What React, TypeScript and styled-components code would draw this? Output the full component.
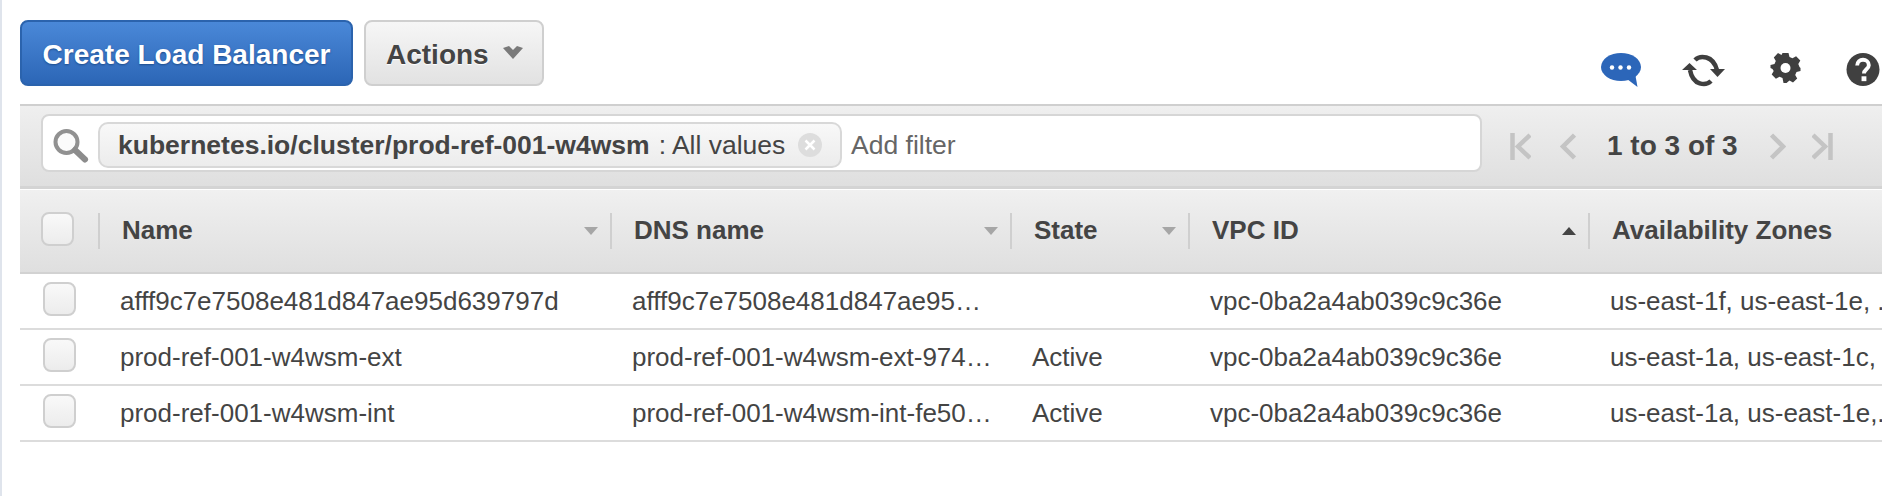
import React from 'react';
import styled, { createGlobalStyle } from 'styled-components';

const Global = createGlobalStyle`
  html, body { margin: 0; padding: 0; background: #fff; }
  body { font-family: "Liberation Sans", Arial, sans-serif; color: #444; overflow: hidden; }
`;

const Page = styled.div`
  height: 496px;
  box-sizing: border-box;
  border-left: 2px solid #dfe4ec;
  padding: 20px 20px 0 18px;
`;

const TopBar = styled.div`
  display: flex;
  align-items: flex-start;
  height: 84px;
`;

const PrimaryButton = styled.button`
  width: 333px;
  height: 66px;
  box-sizing: border-box;
  border: 2px solid #2b63ad;
  border-radius: 8px;
  background: linear-gradient(#4a88d8, #2c66b6);
  color: #fff;
  font: bold 28px "Liberation Sans", Arial, sans-serif;
  text-shadow: 0 1px 2px #1d4c8c;
  padding: 4px 0 0;
`;

const SecondaryButton = styled.button`
  margin-left: 11px;
  width: 180px;
  height: 66px;
  box-sizing: border-box;
  border: 2px solid #cfcfcf;
  border-radius: 8px;
  background: linear-gradient(#f6f6f6, #e2e2e2);
  color: #444;
  font: bold 28px "Liberation Sans", Arial, sans-serif;
  text-shadow: 0 1px 1px #fff;
  display: flex;
  align-items: center;
  padding: 4px 0 0 20px;
  gap: 14px;
`;

const ChevronWrap = styled.span`
  display: flex;
  margin-top: -6px;
`;

const Icons = styled.div`
  margin-left: auto;
  margin-right: 2px;
  margin-top: 33px;
  display: flex;
  align-items: flex-start;
`;

const FilterBar = styled.div`
  height: 85px;
  box-sizing: border-box;
  border-top: 2px solid #cfcfcf;
  border-bottom: 3px solid #d4d4d4;
  background: linear-gradient(#efefef, #dfdfdf);
  display: flex;
  align-items: flex-start;
  padding: 8px 0 0 21px;
`;

const SearchBox = styled.div`
  width: 1441px;
  height: 58px;
  box-sizing: border-box;
  border: 2px solid #d6d6d6;
  border-radius: 8px;
  background: #fff;
  display: flex;
  align-items: center;
  padding-left: 10px;
`;

const SearchIcon = styled.span`
  display: flex;
  margin-top: 6px;
`;

const Token = styled.div`
  margin: 4px 0 0 9px;
  width: 744px;
  height: 46px;
  box-sizing: border-box;
  border: 2px solid #d8d8d8;
  border-radius: 10px;
  background: linear-gradient(#f8f8f8, #ececec);
  display: flex;
  align-items: center;
  padding-left: 18px;
  font-size: 26.5px;
  white-space: nowrap;
`;

const TokenKey = styled.b`
  font-weight: bold;
  margin-right: 9px;
`;

const TokenClose = styled.span`
  margin-left: 13px;
  display: flex;
`;

const AddFilter = styled.span`
  margin: 4px 0 0 9px;
  font-size: 26.5px;
  color: #666;
`;

const Pager = styled.div`
  margin: 17px 0 0 28px;
  height: 30px;
  display: flex;
  align-items: center;
`;

const PagerText = styled.span`
  font-weight: bold;
  font-size: 28px;
  margin: 0 32px 0 31px;
  white-space: nowrap;
`;

const Spacer = styled.div<{ $w: number }>`
  width: ${p => p.$w}px;
  flex: none;
`;

const Grid = styled.div`
  margin-top: 1px;
  display: grid;
  grid-template-columns: 80px 512px 400px 178px 400px 292px;
`;

const HeadCell = styled.div`
  height: 84px;
  box-sizing: border-box;
  border-bottom: 2px solid #d2d2d2;
  background: linear-gradient(#f0f0f0, #dfdfdf);
  display: flex;
  align-items: flex-start;
  padding: 25px 0 0 22px;
  position: relative;
  font-weight: bold;
  font-size: 26px;
  white-space: nowrap;
  overflow: hidden;
  line-height: 30px;
`;

const HeadCheckCell = styled(HeadCell)`
  padding: 22px 0 0;
`;

const Divider = styled.span`
  position: absolute;
  right: 0;
  top: 23px;
  width: 2px;
  height: 36px;
  background: #cfcfcf;
  box-shadow: 1px 0 0 #f6f6f6;
`;

const SortMark = styled.span<{ $up?: boolean }>`
  position: absolute;
  right: 14px;
  top: 37px;
  width: 0;
  height: 0;
  border-left: 7px solid transparent;
  border-right: 7px solid transparent;
  ${p => (p.$up ? `border-bottom: 8px solid #444;` : `border-top: 8px solid #a6a6a6;`)}
`;

const Check = styled.span<{ $head?: boolean }>`
  display: block;
  width: 33px;
  height: 34px;
  box-sizing: border-box;
  border: 2px solid #cfcfcf;
  border-radius: 8px;
  background: linear-gradient(#f9f9f9, #ececec);
  margin-left: ${p => (p.$head ? 21 : 22.5)}px;
`;

const Cell = styled.div`
  height: 56px;
  box-sizing: border-box;
  border-bottom: 2px solid #dcdcdc;
  display: flex;
  align-items: center;
  padding-left: 20px;
  font-size: 26px;
  color: #444;
  white-space: nowrap;
  overflow: hidden;
`;

const CheckCell = styled(Cell)`
  padding-left: 0;
  align-items: flex-start;
  padding-top: 8px;
`;

const PagerIcon = ({ d, w }: { d: string; w: number }) => (
  <svg width={w} height="27" viewBox={`0 0 ${w} 27`} fill="none" stroke="#c4c4c4" strokeWidth="4.5">
    <path d={d} />
  </svg>
);

const columns = [
  { label: 'Name' },
  { label: 'DNS name' },
  { label: 'State' },
  { label: 'VPC ID', up: true },
];

const rows = [
  ['afff9c7e7508e481d847ae95d639797d', 'afff9c7e7508e481d847ae95…', '', 'us-east-1f, us-east-1e, ...'],
  ['prod-ref-001-w4wsm-ext', 'prod-ref-001-w4wsm-ext-974…', 'Active', 'us-east-1a, us-east-1c,'],
  ['prod-ref-001-w4wsm-int', 'prod-ref-001-w4wsm-int-fe50…', 'Active', 'us-east-1a, us-east-1e,..'],
];

export default function App() {
  return (
    <>
      <Global />
      <Page>
        <TopBar>
          <PrimaryButton>Create Load Balancer</PrimaryButton>
          <SecondaryButton>
            Actions
            <ChevronWrap>
              <svg width="20" height="13" viewBox="0 0 20 13">
                <path d="M0 2 L6 0 L10 4 L14 0 L20 2 L10 13 Z" fill="#7a7a7a" />
              </svg>
            </ChevronWrap>
          </SecondaryButton>
          <Icons>
            <svg width="40" height="34" viewBox="0 0 40 34">
              <ellipse cx="20" cy="14" rx="20" ry="14" fill="#2c66b9" />
              <path d="M26 26 L36.500 34 L34 20 Z" fill="#2c66b9" />
              <circle cx="11" cy="14.500" r="2.200" fill="#fff" />
              <circle cx="19.500" cy="14.500" r="2.200" fill="#fff" />
              <circle cx="28" cy="14.500" r="2.200" fill="#fff" />
            </svg>
            <Spacer $w={41} />
            <svg width="43" height="34" viewBox="0 0 43 34" fill="none" stroke="#3f3f3f" strokeWidth="4.500">
              <path d="M13 7C18 2 31 2 35 17" />
              <path d="M29 28C24 33 11 33 8 17" />
              <path d="M28 16h15l-7.500 8zM0 17h15L7.500 10z" fill="#3f3f3f" stroke="none" />
            </svg>
            <Spacer $w={45} />
            <svg width="31" height="30" viewBox="0 0 30 30">
              <path d="M12 0h6l1 4 3 1.300 3.600-2 4.200 4.200-2 3.500L29 14l1 1v3l-4 1-1.300 3 2 3.600-4.200 4-3.500-2L16 30h-3l-1-5-3-1.300-3.600 2-4.200-4.200 2-3.500L2 16l-2-1v-3l4-1 1.300-3-2-3.600L7.500 0l3.500 2z" fill="#3f3f3f" />
              <circle cx="15" cy="15" r="5" fill="#fff" />
            </svg>
            <Spacer $w={45} />
            <svg width="34" height="33" viewBox="0 0 35 34">
              <circle cx="17.500" cy="17" r="17" fill="#404040" />
              <path d="M11.500 13c0-4 3-6 6-6s6 2 6 5.500c0 4-5 4.500-5 8.500" fill="none" stroke="#fff" strokeWidth="4" />
              <rect x="16" y="24" width="5" height="5" fill="#fff" />
            </svg>
          </Icons>
        </TopBar>
        <FilterBar>
          <SearchBox>
            <SearchIcon>
              <svg width="36" height="34" viewBox="0 0 36 34" fill="none">
                <circle cx="13.500" cy="13" r="11" stroke="#919191" strokeWidth="4" fill="#fbfbfb" />
                <path d="M22 21 L32 30.500" stroke="#8c8c8c" strokeWidth="6" strokeLinecap="round" />
              </svg>
            </SearchIcon>
            <Token>
              <TokenKey>kubernetes.io/cluster/prod-ref-001-w4wsm</TokenKey>
              : All values
              <TokenClose>
                <svg width="24" height="24" viewBox="0 0 24 24">
                  <circle cx="12" cy="12" r="12" fill="#dddddd" />
                  <path d="M7.500 7.500l9 9M16.500 7.500l-9 9" stroke="#fff" strokeWidth="2.500" />
                </svg>
              </TokenClose>
            </Token>
            <AddFilter>Add filter</AddFilter>
          </SearchBox>
          <Pager>
            <PagerIcon w={21} d="M2.500 0v27M20 2 8 13.500l12 11.500" />
            <Spacer $w={29} />
            <PagerIcon w={16} d="M14.500 2 3 13.500l11.500 11.500" />
            <PagerText>1 to 3 of 3</PagerText>
            <PagerIcon w={16} d="M1.500 2 13 13.500 1.500 25" />
            <Spacer $w={26} />
            <PagerIcon w={21} d="M1 2l12 11.500L1 25M18.500 0v27" />
          </Pager>
        </FilterBar>
        <Grid>
          <HeadCheckCell>
            <Check $head />
            <Divider />
          </HeadCheckCell>
          {columns.map(c => (
            <HeadCell key={c.label}>
              {c.label}
              <SortMark $up={c.up} />
              <Divider />
            </HeadCell>
          ))}
          <HeadCell>Availability Zones</HeadCell>
          {rows.map(r => (
            <React.Fragment key={r[0]}>
              <CheckCell>
                <Check />
              </CheckCell>
              <Cell>{r[0]}</Cell>
              <Cell>{r[1]}</Cell>
              <Cell>{r[2]}</Cell>
              <Cell>vpc-0ba2a4ab039c9c36e</Cell>
              <Cell>{r[3]}</Cell>
            </React.Fragment>
          ))}
        </Grid>
      </Page>
    </>
  );
}
